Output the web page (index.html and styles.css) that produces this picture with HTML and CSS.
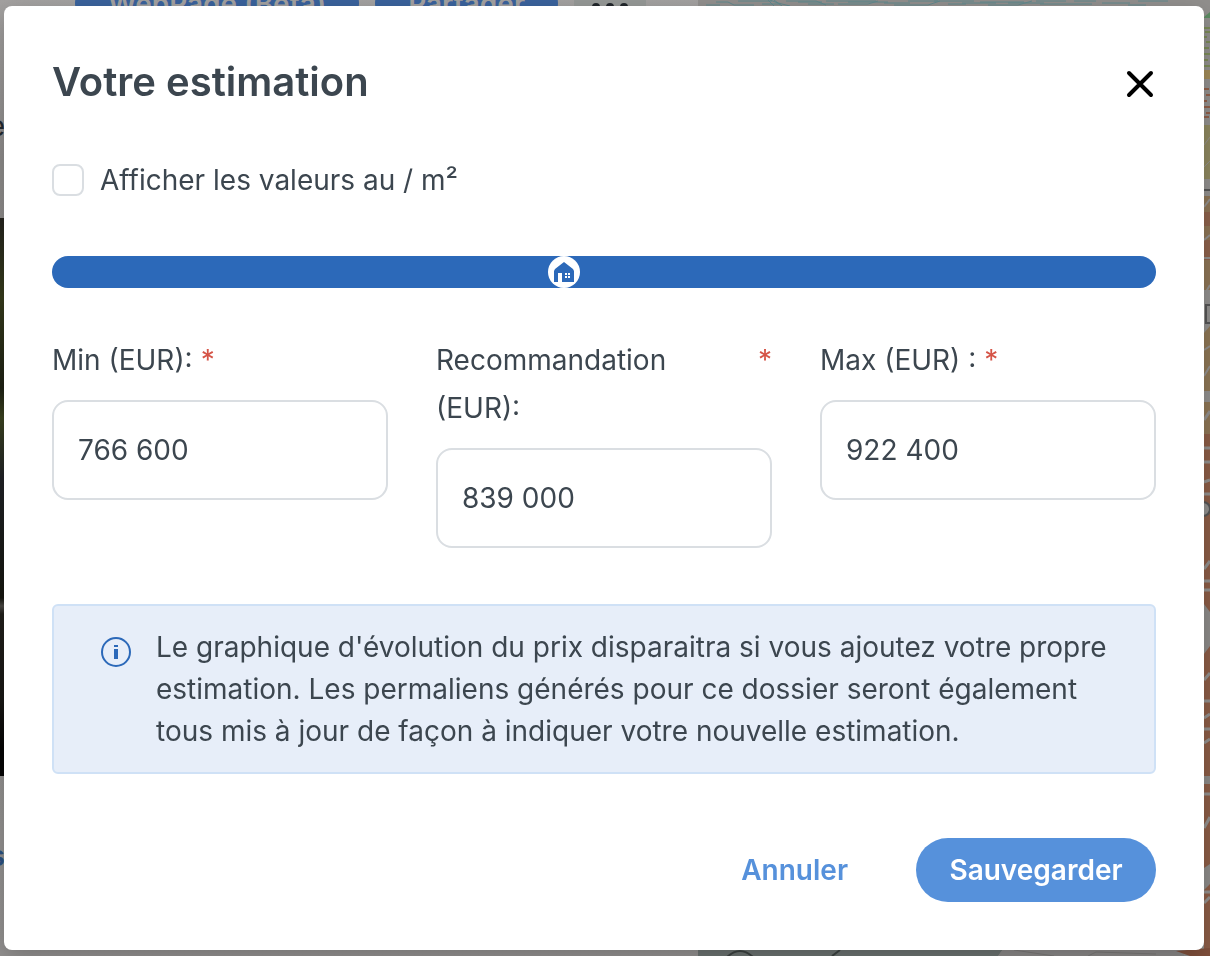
FILE: index.html
```html
<!DOCTYPE html>
<html lang="fr">
<head>
    <meta charset="UTF-8">
    <meta name="viewport" content="width=device-width, initial-scale=1.0">
    <title>Votre estimation</title>
    <link rel="stylesheet" href="styles.css">
</head>
<body>

<!-- Page du dossier, derrière la fenêtre -->
<div class="page">
    <div class="dossier">
        <div class="toolbar">
            <button type="button" class="tool">WebPage (Beta)</button>
            <button type="button" class="tool">Partager</button>
            <button type="button" class="tool tool-more" aria-label="Plus">
                <svg width="40" height="10" viewBox="0 0 40 10"><circle cx="6" cy="5" r="4"/><circle cx="20" cy="5" r="4"/><circle cx="34" cy="5" r="4"/></svg>
            </button>
        </div>
        <p class="edge-text">e</p>
        <div class="photo"></div>
        <p class="edge-text edge-link">s</p>
    </div>
    <svg class="map" viewBox="0 0 512 956" preserveAspectRatio="xMaxYMin slice">
        <rect width="512" height="956" fill="#918f8d"/>
        <!-- Haut de la carte -->
        <g stroke="#61888c" stroke-width="1" fill="none">
            <path d="M8 5h14M18 2h12l6 3h20M40 1h34M64 4h18M72 0l8 3 12 3M88 1h30l10 4M110 4h26M128 1h50M140 4h30l10-3M186 3h26M196 5h34l12-4M236 1h40M250 4h18M282 2h44M290 5h30l14-4M338 1h30M342 4h52M376 1h22M404 3h28M430 5h18M440 1h30"/>
            <path d="M70 0l6 6M76 0l8 6M100 2h24M150 2h40M210 1h30M264 3h34M310 3h36"/>
        </g>
        <!-- Bord droit -->
        <path fill="#5c8b62" d="M506 17l6-5v6h-6z"/>
        <path stroke="#7b8a57" stroke-width="2" d="M506 28h6M507 32h5M506 37h3M508 42h4M506 48h5M506 54h6M506 60h4M506 66h6"/>
        <path fill="#a08a58" d="M506 70h6v9h-6z"/>
        <path stroke="#905e48" stroke-width="2" d="M506 89h5M508 95h4M506 101h3M506 107h6M508 113h4M506 117h5"/>
        <path fill="#8d875f" d="M506 125h6v54h-6z"/>
        <path stroke="#918f8d" d="M506 145l6-8M506 167l6-6"/>
        <path stroke="#555" stroke-width="2" d="M506 190h6"/>
        <path fill="#8c7455" d="M506 196h6v94h-6z"/>
        <path fill="#8c614b" d="M506 212h6v14h-6zM506 240h6v20h-6z"/>
        <path stroke="#918f8d" stroke-width="2" d="M506 207l6-8M506 240l6-5M506 295l6-10M506 258h6"/>
        <path fill="none" stroke="#555" stroke-width="2" d="M512 305h-4v18h4"/>
        <path fill="#8d7655" d="M506 333l6-7v65h-6z"/>
        <path stroke="#918f8d" stroke-width="2" d="M506 350l6-4M506 376l6-10"/>
        <path fill="#8d7555" d="M506 402h6v32h-6z"/>
        <path fill="#8b5c46" d="M506 434h6v522h-6z"/>
        <path stroke="#918f8d" stroke-width="3" d="M506 420l6-9M506 448h6M506 462h6M506 482l6-2M506 494h6M506 569l6-8M506 581h6M506 590h6M506 680l6-7M506 701h6M506 718l6-4M506 729h6M506 743l6-4M506 780h6M506 794h6M506 828l6-11M506 892h6M506 903l6-6"/>
        <path fill="#8c8a88" d="M506 604l6 8v34l-6 8zM506 776h6v8h-6zM506 868l6-4v20l-6 6z"/>
        <circle cx="505" cy="509" r="7" fill="#918f8d" stroke="#555" stroke-width="2"/>
        <!-- Bas de la carte -->
        <path fill="#6b7270" d="M0 948h306l-6 8H0z"/>
        <path fill="none" stroke="#3c4241" stroke-width="2" d="M28 958q14-14 28 0M134 956l8-6"/>
        <path fill="#8a8887" d="M306 948h180v8H300z"/>
        <path fill="none" stroke="#7a7877" d="M316 950l40 6M390 956l8-4 60 2"/>
        <path fill="#80503c" d="M478 951l34-3v8h-20z"/>
    </svg>
</div>

<!-- Fenêtre d'estimation -->
<div class="overlay">
    <form class="modal" role="dialog" aria-labelledby="titre">
        <div class="modal-header">
            <h1 id="titre">Votre estimation</h1>
            <button type="button" class="close" aria-label="Fermer">
                <svg width="32" height="32" viewBox="0 0 32 32"><path d="M5 7l22 22M27 7L5 29"/></svg>
            </button>
        </div>

        <div class="check">
            <input type="checkbox" id="valeurs">
            <label for="valeurs">Afficher les valeurs au / m²</label>
        </div>

        <div class="slider">
            <input type="range" min="766600" max="922400" step="100" value="838700" aria-label="Recommandation">
            <svg class="slider-house" style="left: 44.9%" width="32" height="32" viewBox="0 0 32 32">
                <circle cx="16" cy="16" r="16" fill="#fff"/>
                <path fill="#2c69b9" d="M16 6l9 7 1 2v11H14v-9h-4v9H6V15l1-2z"/>
                <path fill="#fff" d="M17 17h2v2h-2zM20 17h2v2h-2zM17 20h2v2h-2zM20 20h2v2h-2z"/>
            </svg>
        </div>

        <div class="fields">
            <div class="field">
                <div class="field-label"><label for="min">Min (EUR):</label><span class="required">*</span></div>
                <input type="text" id="min" value="766 600">
            </div>
            <div class="field">
                <div class="field-label"><label for="reco">Recommandation (EUR):</label><span class="required">*</span></div>
                <input type="text" id="reco" value="839 000">
            </div>
            <div class="field">
                <div class="field-label"><label for="max">Max (EUR) :</label><span class="required">*</span></div>
                <input type="text" id="max" value="922 400">
            </div>
        </div>

        <div class="info">
            <svg class="info-icon" width="32" height="32" viewBox="0 0 32 32">
                <circle cx="16" cy="16" r="14" fill="none" stroke="#2c69b9" stroke-width="2"/>
                <path fill="#2c69b9" d="M14 9h4v2h-4zM14 13h4v10h-4z"/>
            </svg>
            <p>Le graphique d'évolution du prix disparaitra si vous ajoutez votre propre estimation. Les permaliens générés pour ce dossier seront également tous mis à jour de façon à indiquer votre nouvelle estimation.</p>
        </div>

        <div class="actions">
            <button type="button" class="btn btn-link">Annuler</button>
            <button type="submit" class="btn btn-primary">Sauvegarder</button>
        </div>
    </form>
</div>

</body>
</html>
```
FILE: styles.css
```css
* {
    box-sizing: border-box;
}
body {
    margin: 0;
    font-family: Inter, "Liberation Sans", sans-serif;
    font-size: 28px;
    line-height: 48px;
    color: #3c464f;
    background-color: #939190;
}
h1, p {
    margin: 0;
}
button, input {
    font: inherit;
    color: inherit;
}
button {
    border: none;
    cursor: pointer;
}

/* Page */
.page {
    display: grid;
    grid-template-columns: 698fr 512fr;
    height: 100vh;
    overflow: hidden;
}
.dossier {
    min-width: 0;
    background: linear-gradient(#a3a1a0, #8c8a89 160px, #939190);
}
.toolbar {
    display: flex;
    gap: 16px;
    margin-top: -28px;
    padding-left: 75px;
}
.tool {
    height: 64px;
    padding: 0 33px;
    border-radius: 32px;
    font-weight: 600;
    white-space: nowrap;
    color: #a3a1a0;
    background-color: #3a629c;
}
.tool-more {
    display: flex;
    align-items: center;
    padding: 6px 16px 0;
    border-radius: 0;
    background-color: #959896;
    fill: #22262b;
}
.edge-text {
    display: flex;
    justify-content: flex-end;
    width: 5px;
    margin-top: 66px;
    overflow: hidden;
    color: #22282e;
}
.edge-link {
    margin-top: 56px;
    color: #2b4f80;
    font-weight: 600;
}
.photo {
    height: 558px;
    margin-top: 68px;
    background: linear-gradient(#24231d, #363b1c 80px, #1e2114 170px, #3b4220 200px, #202226 260px, #15160f 380px, #4a4844 388px, #211f1b 396px, #191815 480px, #050505 530px);
}
.map {
    width: 100%;
    height: 100%;
}

/* Modal */
.overlay {
    position: fixed;
    inset: 0;
    padding: 6px 6px 6px 4px;
}
.modal {
    padding: 48px;
    border-radius: 8px;
    background-color: #fff;
    box-shadow: 0 8px 24px rgba(0, 0, 0, 0.2);
}
.modal-header {
    display: flex;
    justify-content: space-between;
    align-items: center;
    margin-bottom: 46px;
}
h1 {
    font-size: 40px;
    font-weight: 600;
    line-height: 56px;
}
.close {
    display: flex;
    padding: 0;
    background: none;
}
.close path {
    stroke: #000;
    stroke-width: 4;
    stroke-linecap: round;
}
.check {
    display: flex;
    align-items: center;
    gap: 16px;
    margin-bottom: 52px;
}
.check input {
    appearance: none;
    width: 32px;
    height: 32px;
    margin: 0;
    border: 2px solid #dadee2;
    border-radius: 8px;
}
.slider {
    position: relative;
    height: 32px;
    margin-bottom: 48px;
}
.slider input {
    appearance: none;
    display: block;
    width: 100%;
    height: 32px;
    margin: 0;
    border-radius: 16px;
    background-color: #2c69b9;
}
.slider input::-webkit-slider-thumb {
    appearance: none;
    width: 32px;
    height: 32px;
    background: none;
}
.slider-house {
    position: absolute;
    top: 0;
    pointer-events: none;
}
.fields {
    display: grid;
    grid-template-columns: repeat(3, 1fr);
    gap: 48px;
    align-items: start;
    margin-bottom: 56px;
}
.field-label {
    display: flex;
    gap: 8px;
    margin-bottom: 16px;
}
.required {
    color: #d55447;
}
.field input {
    display: block;
    width: 100%;
    height: 100px;
    padding: 0 24px;
    border: 2px solid #dadee2;
    border-radius: 16px;
    background-color: #fff;
}
.info {
    display: flex;
    gap: 24px;
    margin-bottom: 64px;
    padding: 20px 46px;
    border: 2px solid #cfe1f6;
    border-radius: 6px;
    line-height: 42px;
    background-color: #e7eef9;
}
.info-icon {
    flex: none;
    margin-top: 10px;
}
.actions {
    display: flex;
    justify-content: flex-end;
    gap: 36px;
}
.btn {
    height: 64px;
    padding: 0 32px;
    border-radius: 32px;
    font-weight: 600;
}
.btn-link {
    color: #5691db;
    background: none;
}
.btn-primary {
    min-width: 240px;
    color: #fff;
    background-color: #5691db;
}
```
